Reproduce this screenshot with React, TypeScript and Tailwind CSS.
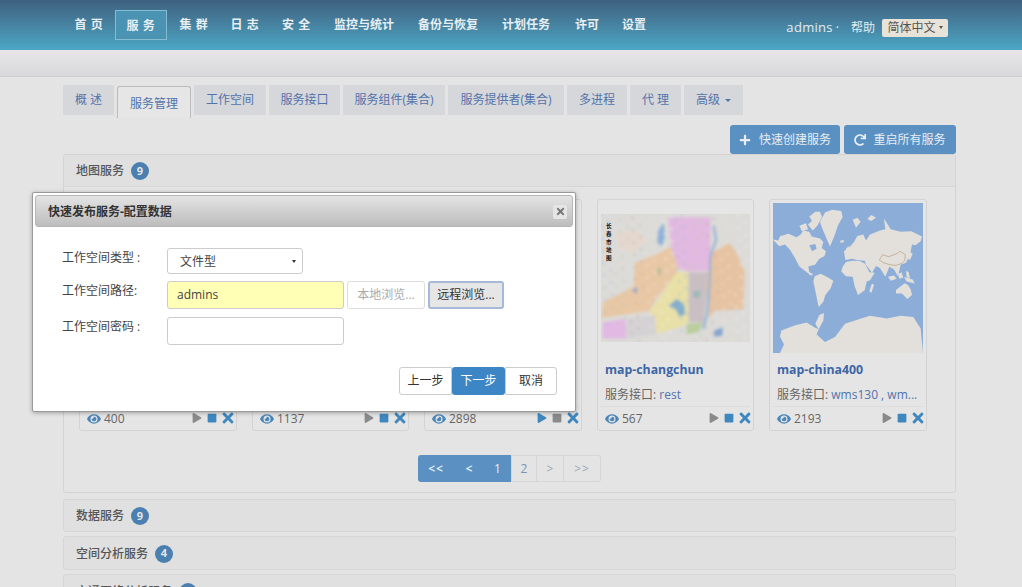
import { ReactNode } from "react";
import { FaEye, FaPlay, FaPlus, FaRedo, FaStop, FaTimes } from "react-icons/fa";

const font = "font-['Open_Sans','Noto_Sans_CJK_SC',sans-serif]";

const navItems = [
  { label: "首 页", width: "w-[52px]", spaced: true },
  { label: "服 务", width: "w-[52px]", spaced: true, active: true },
  { label: "集 群", width: "w-[54px]", spaced: true },
  { label: "日 志", width: "w-[48px]", spaced: true },
  { label: "安 全", width: "w-[55px]", spaced: true },
  { label: "监控与统计", width: "w-[80px]" },
  { label: "备份与恢复", width: "w-[88px]" },
  { label: "计划任务", width: "w-[68px]" },
  { label: "许可", width: "w-[54px]" },
  { label: "设置", width: "w-[40px]" },
];

const tabs = [
  { label: "概 述", width: "w-[51px]" },
  { label: "服务管理", width: "w-[74px]", active: true },
  { label: "工作空间", width: "w-[72px]" },
  { label: "服务接口", width: "w-[71px]" },
  { label: "服务组件(集合)", width: "w-[102px]" },
  { label: "服务提供者(集合)", width: "w-[116px]" },
  { label: "多进程", width: "w-[60px]" },
  { label: "代 理", width: "w-[51px]" },
  { label: "高级", width: "w-[59px]", caret: true },
];

const WorldMap = () => (
  <svg viewBox="9 6 450 447" preserveAspectRatio="none" className="h-full w-full">
    <defs>
      <filter id="soft">
        <feGaussianBlur stdDeviation="0.9" />
      </filter>
    </defs>
    <rect x="0" y="0" width="468" height="456" fill="#8cadd8" />
    <g fill="#e3e0db" filter="url(#soft)">
      <polygon points="8,115 25,118 30,105 55,98 80,108 92,100 100,88 118,92 125,106 150,112 160,122 155,140 168,150 163,165 148,172 135,190 125,192 115,195 118,212 130,218 122,222 105,208 88,195 75,170 60,145 45,130 28,135" />
      <polygon points="118,46 136,32 150,32 156,48 142,74 128,88 114,70 126,60" />
      <polygon points="88,74 108,66 114,84 96,90" />
      <polygon points="165,34 186,26 214,30 218,48 204,72 194,102 180,136 168,108 156,80 150,62" />
      <polygon points="134,224 152,217 170,226 190,238 182,260 166,280 160,300 146,316 141,292 134,258 130,240" />
      <polygon points="218,196 228,182 246,178 268,178 286,188 298,212 314,214 300,236 290,240 284,266 264,280 254,254 248,226 228,224 214,210" />
      <polygon points="226,176 222,150 240,136 252,122 262,104 280,100 288,118 300,100 330,88 346,84 342,52 362,84 392,92 424,90 456,106 452,120 436,132 426,130 420,160 408,184 392,190 384,224 372,204 358,196 346,226 330,200 318,194 306,214 288,190 284,178 262,176 246,172" />
      <polygon points="248,56 262,50 272,62 258,80" />
      <polygon points="292,54 304,42 318,50 304,60" />
      <polygon points="212,118 222,116 220,124 210,124" />
      <polygon points="228,142 236,134 238,150 230,156" />
      <polygon points="354,226 372,222 380,232 362,238" />
      <polygon points="384,218 394,212 400,228 388,232" />
      <polygon points="402,226 428,234 434,246 410,240" />
      <polygon points="378,265 404,245 414,250 422,264 426,280 412,292 396,276 378,276" />
      <polygon points="408,208 416,212 420,232 410,226" />
      <polygon points="418,150 428,158 420,176 414,172" />
      <polygon points="306,246 312,250 304,274 298,268" />
      <polygon points="148,340 162,334 160,356 146,382 136,366" />
      <polygon points="34,386 76,370 110,362 135,378 146,382 140,398 165,420 195,405 225,366 262,354 300,342 350,350 392,342 430,346 452,380 459,453 30,453 42,428 30,404" />
    </g>
    <polygon points="118,132 136,128 140,142 126,150" fill="#8cadd8" />
    <polyline
      points="328,176 338,160 356,166 382,156 390,150 406,160 404,178 396,186 378,192 360,190 340,184 328,176"
      fill="none"
      stroke="#a9835f"
      strokeWidth="1.5"
    />
  </svg>
);

const speckles = Array.from({ length: 190 }).map((_, index) => ({
  x: (index * 137) % 456,
  y: (index * 83) % 396,
  color: ["#a9bed6", "#f0e4d8", "#c0c8b8", "#f3efe8", "#c9b0a8"][index % 5],
}));

const mapTitle = ["长", "春", "市", "地", "图"];

const ChangchunMap = () => (
  <svg viewBox="0 0 456 396" preserveAspectRatio="none" className="h-full w-full">
    <defs>
      <filter id="blurred">
        <feGaussianBlur stdDeviation="4.5" />
      </filter>
    </defs>
    <rect x="0" y="0" width="456" height="396" fill="#dcdbd8" />
    <g filter="url(#blurred)">
      <polygon points="205,10 335,10 335,175 265,178 235,165 215,100" fill="#e2b9e0" />
      <polygon points="105,150 170,125 215,100 235,165 232,185 170,260 148,300 0,322 8,272 100,225" fill="#e8c7a4" />
      <polygon points="232,180 268,180 268,335 240,350 170,370 150,300" fill="#e8e0a6" />
      <polygon points="268,180 330,180 315,335 268,335" fill="#c9bfc3" />
      <polygon points="335,120 395,90 420,130 440,180 436,295 345,300 332,325 322,220" fill="#e6c3a2" />
      <polygon points="5,335 75,325 78,385 5,385" fill="#e2b8e4" />
      <polygon points="262,340 312,336 300,365 262,372" fill="#b9ce9d" />
      <polygon points="80,325 165,312 170,372 80,385" fill="#d4d2d4" />
      <polygon points="40,60 110,50 140,80 100,120 60,110" fill="#e4d8ce" />
      <polyline points="345,36 352,80 335,130 332,220 325,310 312,355" fill="none" stroke="#8eb5d8" strokeWidth="7" />
      <polygon points="176,50 192,26 196,70 186,100 172,88" fill="#8eb1d8" />
      <polygon points="206,285 232,262 255,280 258,310 240,318 228,295" fill="#84aecb" />
      <polygon points="345,362 372,350 372,376 348,380" fill="#84a6cf" />
      <polygon points="95,235 112,226 108,248" fill="#84a6cf" />
      <polygon points="172,170 184,168 180,196" fill="#a3bd94" />
      <polygon points="280,240 306,236 300,262 284,258" fill="#9fb8b8" />
      {speckles.map((dot, index) => (
        <circle key={index} cx={dot.x} cy={dot.y} r="4" fill={dot.color} opacity="0.6" />
      ))}
    </g>
    {mapTitle.map((char, index) => (
      <text
        key={char}
        x="15"
        y={43 + index * 25}
        fontSize="17"
        fontWeight="700"
        fontFamily="'Noto Sans CJK SC', sans-serif"
        fill="#111"
      >
        {char}
      </text>
    ))}
  </svg>
);

const Card = ({
  width,
  name,
  ports,
  views,
  map,
  playOn,
  stopOn,
}: {
  width: string;
  name?: string;
  ports?: ReactNode;
  views: string;
  map?: ReactNode;
  playOn?: boolean;
  stopOn?: boolean;
}) => (
  <div className={`flex h-[232px] flex-col rounded-[3px] border border-[#d3d3d3] bg-[#e5e5e5] px-[3px] pt-[3px] ${width}`}>
    <div className="h-[150px] w-full">{map}</div>
    <div className="h-[26px] pl-[4px] pt-[8px] text-[12.3px] font-bold leading-[17px] text-[#3d66a5]">{name}</div>
    <div className="mt-[3px] h-[24px] truncate pl-[4px] pt-[4px] text-[12px] leading-[18px] text-[#666]">
      {ports && <>服务接口: {ports}</>}
    </div>
    <div className="flex flex-1 items-center justify-between border-t border-[#dcdcdc] pl-[4px] pt-[1px] text-[12px] text-[#666]">
      <span className="flex items-center gap-[3px]">
        <FaEye className="size-[14px] text-[#4a86b8]" />
        {views}
      </span>
      <span className="-mr-[3px] mb-[3px] flex items-center">
        <FaPlay className={`mr-[5px] size-[10px] ${playOn ? "text-[#3f88bf]" : "text-[#8a8a8a]"}`} />
        <FaStop className={`mr-[3px] size-[10px] ${stopOn ? "text-[#3f88bf]" : "text-[#8a8a8a]"}`} />
        <FaTimes className="size-[16px] text-[#3f88bf]" />
      </span>
    </div>
  </div>
);

const Badge = ({ count }: { count: string }) => (
  <span className="flex size-[18px] items-center justify-center rounded-full bg-[#4a7fb0] text-[11px] font-bold text-[#e5e5e5]">
    {count}
  </span>
);

const PanelHeading = ({ title, count, height }: { title: string; count: string; height: string }) => (
  <div className={`flex items-center gap-[7px] rounded-[3px] border border-[#d6d6d6] bg-[#e0e0e0] pl-[12px] pt-[1px] text-[12px] font-medium text-[#555] ${height}`}>
    {title}
    <Badge count={count} />
  </div>
);

const Modal = () => (
  <div className="absolute left-[32px] top-[192px] h-[220px] w-[544px] rounded-[2px] border border-[#9a9a9a] bg-white p-[2px] shadow-[0_1px_4px_rgba(0,0,0,0.3)]">
    <div className="flex h-[32px] items-center justify-between rounded-[3px] border border-[#b5b5b5] bg-gradient-to-b from-[#e4e4e4] to-[#bdbdbd] pl-[12px] pr-[5px] pt-[1px] text-[12px] font-bold text-[#333]">
      快速发布服务-配置数据
      <span className="flex size-[14px] items-center justify-center rounded-[2px] bg-[#e5e5e5]">
        <FaTimes className="size-[11px] text-[#777]" />
      </span>
    </div>
    <div className="mt-[20px] flex flex-col pl-[27px] text-[12px] text-[#444]">
      <div className="flex h-[27px] items-center">
        <span className="mb-[6px] w-[105px] whitespace-pre">工作空间类型 :</span>
        <span className="flex h-[26px] w-[136px] items-center justify-between rounded-[3px] border border-[#ccc] pl-[12px] pr-[6px] pt-[2px] text-[#444]">
          文件型
          <span className="border-x-[2px] border-t-[3px] border-x-transparent border-t-[#333]" />
        </span>
      </div>
      <div className="mt-[7px] flex h-[28px] items-center">
        <span className="mb-[9px] w-[105px]">工作空间路径:</span>
        <span className="flex h-[28px] w-[177px] items-center rounded-[3px] border border-[#ccc] bg-[#ffffb5] pl-[9px] text-[#444]">
          admins
        </span>
        <span className="ml-[3px] flex h-[28px] w-[78px] items-center justify-center rounded-[3px] border border-[#ddd] text-[#aaa]">
          本地浏览...
        </span>
        <span className="ml-[3px] flex h-[28px] w-[76px] items-center justify-center rounded-[3px] border-2 border-[#a6b9d8] bg-[#e6e6e6] text-[#333]">
          远程浏览...
        </span>
      </div>
      <div className="mt-[8px] flex h-[28px] items-center">
        <span className="mb-[9px] w-[105px] whitespace-pre">工作空间密码 :</span>
        <span className="h-[28px] w-[177px] rounded-[3px] border border-[#ccc]" />
      </div>
      <div className="mt-[22px] flex justify-end pr-[16px] text-[#333]">
        <span className="flex h-[28px] w-[53px] items-center justify-center rounded-l-[3px] border border-[#ccc]">上一步</span>
        <span className="flex h-[28px] w-[53px] items-center justify-center rounded-[3px] bg-[#3d86c6] text-white">下一步</span>
        <span className="flex h-[28px] w-[52px] items-center justify-center rounded-r-[3px] border border-[#ccc]">取消</span>
      </div>
    </div>
  </div>
);

export default function App() {
  return (
    <div className={`relative h-[587px] w-[1022px] overflow-hidden bg-[#e4e4e4] ${font}`}>
      <header className="flex h-[50px] items-center justify-between bg-gradient-to-b from-[#3f6180] to-[#4aa7c4] pl-[63px] pr-[74px]">
        <nav className="flex">
          {navItems.map((item) => (
            <span
              key={item.label}
              className={`flex h-[30px] items-center justify-center text-[12px] font-bold text-[#e8eef2] ${item.width} ${item.spaced ? "tracking-[0.6px]" : ""} ${item.active ? "border border-[#86bcd2] bg-[#4b93b2] pt-[2px]" : ""}`}
            >
              {item.label}
            </span>
          ))}
        </nav>
        <div className="mt-[6px] flex items-center text-[12px] text-[#e3edf1]">
          <span className="text-[13px] tracking-[0.3px]">admins</span>
          <span className="ml-[3px] mr-[12px]">·</span>
          <span>帮助</span>
          <span className="ml-[7px] flex h-[18px] w-[66px] items-center justify-center gap-[3px] rounded-[2px] bg-[#e8e3d8] text-[#555]">
            简体中文
            <span className="mb-[2px] border-x-[2px] border-t-[3px] border-x-transparent border-t-[#555]" />
          </span>
        </div>
      </header>
      <div className="h-[27px] border-b border-[#cfcfd2] bg-gradient-to-b from-[#e8e6e8] to-[#d8d9dc]" />
      <main className="pl-[63px] pr-[66px] pt-[8px]">
        <div className="flex gap-[3px]">
          {tabs.map((tab) => (
            <span
              key={tab.label}
              className={`flex h-[30px] items-center justify-center gap-[5px] text-[12px] text-[#5273ab] ${tab.width} ${tab.active ? "relative top-[1px] h-[32px] rounded-t-[3px] border border-b-0 border-[#bbb] bg-[#e6e6e6] pt-[2px] text-[#4b76ad]" : "rounded-[1px] bg-[#d6d7da]"}`}
            >
              {tab.label}
              {tab.caret && <span className="border-x-[3px] border-t-[3px] border-x-transparent border-t-[#5273ab]" />}
            </span>
          ))}
        </div>
        <div className="mt-[8px] flex justify-end gap-[4px] text-[12px] text-[#e8eef2]">
          <span className="flex h-[29px] w-[110px] items-center justify-center gap-[8px] rounded-[3px] bg-[#5b91c2]">
            <FaPlus className="size-[12px]" />
            快速创建服务
          </span>
          <span className="flex h-[29px] w-[112px] items-center justify-center gap-[7px] rounded-[3px] bg-[#5b91c2]">
            <FaRedo className="size-[12px]" />
            重启所有服务
          </span>
        </div>
        <section className="rounded-[3px] border border-[#d3d3d3]">
          <div className="flex h-[32px] items-center gap-[7px] border-b border-[#d6d6d6] bg-[#e0e0e0] pl-[12px] pt-[1px] text-[12px] font-medium text-[#555]">
            地图服务
            <Badge count="9" />
          </div>
          <div className="flex gap-[15px] pl-[15px] pt-[12px]">
            <Card width="w-[158px]" views="400" stopOn />
            <Card width="w-[157px]" views="1137" stopOn />
            <Card width="w-[158px]" views="2898" playOn />
            <Card
              width="w-[157px]"
              name="map-changchun"
              ports={<span className="text-[#5273ab]">rest</span>}
              views="567"
              map={
                <div className="mt-[11px] h-[128px]">
                  <ChangchunMap />
                </div>
              }
              stopOn
            />
            <Card
              width="w-[158px]"
              name="map-china400"
              ports={<span className="text-[#5273ab]">wms130 , wm...</span>}
              views="2193"
              map={<WorldMap />}
              stopOn
            />
          </div>
          <div className="flex justify-center pb-[10px] pt-[24px] text-[12px]">
            <span className="flex h-[27px] w-[36px] items-center justify-center rounded-l-[3px] bg-[#5b91c2] font-bold tracking-[1px] text-[#dce8f2]">&lt;&lt;</span>
            <span className="flex h-[27px] w-[30px] items-center justify-center bg-[#5b91c2] font-bold text-[#dce8f2]">&lt;</span>
            <span className="flex h-[27px] w-[27px] items-center justify-center bg-[#5b91c2] text-[#e5eef5]">1</span>
            <span className="flex h-[27px] w-[26px] items-center justify-center border border-[#d6d6d6] text-[#7c93b5]">2</span>
            <span className="flex h-[27px] w-[27px] items-center justify-center border-y border-r border-[#d6d6d6] text-[#9aa5b5]">&gt;</span>
            <span className="flex h-[27px] w-[37px] items-center justify-center rounded-r-[3px] border-y border-r border-[#d6d6d6] tracking-[1px] text-[#9aa5b5]">&gt;&gt;</span>
          </div>
        </section>
        <div className="mt-[6px] flex flex-col gap-[4px]">
          <PanelHeading title="数据服务" count="9" height="h-[33px]" />
          <PanelHeading title="空间分析服务" count="4" height="h-[34px]" />
          <PanelHeading title="交通网络分析服务" count="2" height="h-[34px]" />
        </div>
      </main>
      <Modal />
    </div>
  );
}
